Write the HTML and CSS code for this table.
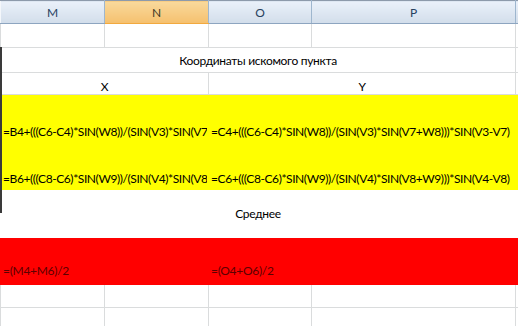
FILE: index.html
```html
<!DOCTYPE html>
<html lang="ru">
<head>
  <meta charset="UTF-8">
  <title>Координаты искомого пункта</title>
  <link rel="stylesheet" href="styles.css">
</head>
<body>
  <div id="sheet">
    <table id="grid">
      <colgroup>
        <col class="c-m"><col class="c-n"><col class="c-o"><col class="c-p"><col class="c-q">
      </colgroup>
      <tr class="head">
        <th>M</th><th class="sel">N</th><th>O</th><th>P</th><th></th>
      </tr>
      <tr class="r2">
        <td></td><td></td><td></td><td></td><td></td>
      </tr>
      <tr class="r3">
        <td colspan="4" class="center">Координаты искомого пункта</td><td></td>
      </tr>
      <tr class="r4">
        <td colspan="2" class="center">X</td><td colspan="2" class="center">Y</td><td></td>
      </tr>
      <tr class="yellow y1">
        <td colspan="2"><div class="clip">=B4+(((C6-C4)*SIN(W8))/(SIN(V3)*SIN(V7+W8)))*SIN(V3-V7)</div></td>
        <td colspan="3">=C4+(((C6-C4)*SIN(W8))/(SIN(V3)*SIN(V7+W8)))*SIN(V3-V7)</td>
      </tr>
      <tr class="yellow y2">
        <td colspan="2"><div class="clip">=B6+(((C8-C6)*SIN(W9))/(SIN(V4)*SIN(V8+W9)))*SIN(V4-V8)</div></td>
        <td colspan="3">=C6+(((C8-C6)*SIN(W9))/(SIN(V4)*SIN(V8+W9)))*SIN(V4-V8)</td>
      </tr>
      <tr class="avg">
        <td colspan="4" class="center">Среднее</td><td></td>
      </tr>
      <tr class="red">
        <td colspan="2">=(M4+M6)/2</td><td colspan="3">=(O4+O6)/2</td>
      </tr>
      <tr class="r9">
        <td></td><td></td><td></td><td></td><td></td>
      </tr>
      <tr class="r10">
        <td></td><td></td><td></td><td></td><td></td>
      </tr>
    </table>
    <div class="range-edge"></div>
  </div>
</body>
</html>
```

FILE: styles.css
```css
body {
  margin: 0;
  background: #fff;
  font-family: Lato, "Open Sans", sans-serif;
  font-size: 12px;
  letter-spacing: -0.3px;
  color: #000;
  overflow: hidden;
}
#sheet {
  position: relative;
  width: 518px;
  height: 326px;
  overflow: hidden;
}
#grid {
  table-layout: fixed;
  border-collapse: collapse;
  width: 518px;
}
.c-m { width: 104px; }
.c-n { width: 104px; }
.c-o { width: 103px; }
.c-p { width: 204px; }
.c-q { width: 3px; }

th, td {
  padding: 0 2px;
  white-space: nowrap;
  overflow: hidden;
  border: 1px solid #dadcdd;
  text-align: left;
}
.head th {
  height: 22px;
  font-weight: normal;
  letter-spacing: 0;
  text-align: center;
  color: #27415f;
  background: linear-gradient(#eaf1fa, #d2ddea);
  border-top: 1px solid #8d9aab;
  border-left: 1px solid #f4f7fb;
  border-right: 1px solid #9eb6ce;
  border-bottom: 1px solid #8da5c0;
}
.head th.sel {
  color: #3f3a26;
  background: linear-gradient(#f9d99c, #f5c06e);
  border-bottom-color: #f2a93e;
}
.r2 td { height: 23px; }
.r3 td { height: 24px; border-top-color: #c9cfd6; }
.r4 td { height: 21px; vertical-align: bottom; }
.center { text-align: center; }

.yellow td {
  background: #ffff00;
  border-color: #ffff00;
  vertical-align: bottom;
  padding-bottom: 3px;
}
.yellow td:last-child { letter-spacing: -0.42px; }
.clip {
  width: 204px;
  overflow: hidden;
  letter-spacing: -0.42px;
}
.y1 td { height: 44px; }
.y2 td { height: 43px; padding-bottom: 3px; }

.avg td { height: 47px; border-color: #fff; }

.red td {
  height: 40px;
  background: #ff0000;
  border-color: #ff0000;
  color: #5c0000;
  vertical-align: bottom;
  padding-bottom: 6px;
}
.r9 td { height: 22px; }
.r10 td { height: 22px; }

/* dark edge of the selected range on the left */
.range-edge {
  position: absolute;
  left: 0;
  top: 47px;
  width: 2px;
  height: 166px;
  background: #3a3a3a;
}
```
